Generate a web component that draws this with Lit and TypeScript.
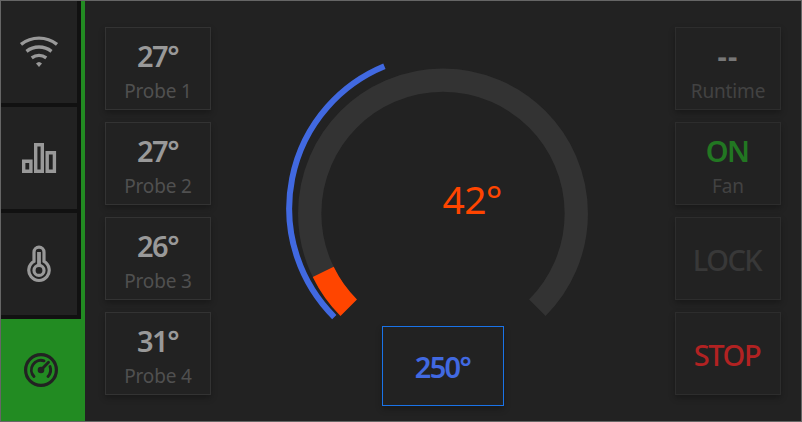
import { LitElement, html, css, svg } from "lit";
import { customElement, property } from "lit/decorators.js";

const wifi = svg`<g fill="none" stroke="#999" stroke-width="3.4">
  <path d="M21 44.4A29 29 0 0 1 57 44.4"/><path d="M26.5 51.3A20.5 20.5 0 0 1 51.5 51.3"/>
  <path d="M31.7 57.9A12.5 12.5 0 0 1 46.3 57.9"/></g>
  <path fill="#999" d="M36 63.6Q39 60.4 42 63.6L39 67Z"/>`;
const bars = svg`<path fill="none" stroke="#999" stroke-width="3.4"
  d="M23.7 55.2h7.2v10h-7.2zM35.7 38.7h6.6v26.5h-6.6zM47.2 46.7h7.2v18.5h-7.2z"/>`;
const thermometer = svg`<g fill="none" stroke="#999" stroke-width="3.2">
  <path d="M34 49.4V40.2a5 5 0 0 1 10 0V49.4a10.2 10.2 0 1 1 -10 0z"/>
  <circle cx="39" cy="58.4" r="5"/><path d="M39 40V54" stroke-width="3.8"/></g>`;
const gauge = svg`<g fill="none" stroke="#222" stroke-width="3.2">
  <circle cx="41" cy="52" r="15.4"/>
  <path stroke-width="2.9" stroke-linecap="round" d="M34 58.5A9.6 9.6 0 0 1 44 42.8M50 48.6A9.6 9.6 0 0 1 48 58.5"/>
  <path stroke-width="2.9" stroke-linecap="round" d="M41 52L48.5 44.3"/></g>
  <circle cx="41" cy="52" r="3.3" fill="#222"/>`;

@customElement("nav-tile")
class NavTile extends LitElement {
  @property({ attribute: false }) icon: unknown;
  static styles = css`
    :host { display: block; height: 102px; width: 76px; background: #222; border: solid #111; border-width: 0 4px 4px 0; }
    :host([active]) { width: 84px; background: #228b22; border: 0; }
    svg { display: block; overflow: visible; }
  `;
  render() {
    return html`<svg width="76" height="102" viewBox="1 1 76 102">${this.icon}</svg>`;
  }
}

@customElement("info-card")
class InfoCard extends LitElement {
  @property() value = "";
  @property() label = "";
  static styles = css`
    :host {
      box-sizing: border-box; width: 106px; height: 83px; border: 1px solid #333;
      background: #222; box-shadow: 0 3px 6px rgba(0, 0, 0, 0.28);
      display: flex; flex-direction: column; align-items: center; justify-content: center;
      padding-top: 2px; white-space: nowrap; color: #999;
    }
    :host([label]) { padding-top: 8px; }
    .value { font-size: 29px; line-height: 36px; font-weight: 600; letter-spacing: -1.5px; margin-right: 1px; }
    .label { font-size: 19px; line-height: 34px; font-weight: 400; color: #505050; letter-spacing: -0.15px; }
    :host(.side) { border-color: #2d2d2d; }
    :host(.side) .value { margin-right: 2px; }
    :host(.side) .label { color: #424242; }
    :host(.runtime) .value { color: #777; font-weight: 700; letter-spacing: 1.2px; margin-right: 0; }
    :host(.on) .value { color: #227722; letter-spacing: -1.6px; }
    :host(.lock) .value { color: #383838; font-weight: 500; letter-spacing: -1.5px; }
    :host(.stop) .value { color: #b22222; font-weight: 500; letter-spacing: -1.4px; }
    :host(.target) { width: 122px; height: 80px; border-color: #1a73e8; }
    :host(.target) .value { color: #4169e1; letter-spacing: -1.6px; }
  `;
  render() {
    return html`<span class="value">${this.value}</span>
      ${this.label ? html`<span class="label">${this.label}</span>` : null}`;
  }
}

@customElement("app-root")
class AppRoot extends LitElement {
  static styles = css`
    :host {
      display: flex; box-sizing: border-box; width: 802px; height: 422px;
      border: 1px solid #666; background: #222; overflow: hidden;
      font-family: "Noto Sans", "Open Sans", sans-serif;
    }
    nav { box-sizing: border-box; width: 84px; flex: none; background: #228b22; }
    .column { display: flex; flex-direction: column; gap: 12px; padding-top: 26px; flex: none; }
    .left { margin-left: 20px; }
    .right { margin-right: 20px; }
    .center { flex: 1; position: relative; display: flex; flex-direction: column; align-items: center; justify-content: flex-end; }
    .center info-card { margin: 0 0 15px 0; }
    .dial { position: absolute; left: 0; top: 0; width: 464px; height: 420px; }
    .reading { font-size: 39px; fill: #ff4500; }
  `;
  render() {
    return html`
      <nav>
        <nav-tile .icon=${wifi}></nav-tile>
        <nav-tile .icon=${bars}></nav-tile>
        <nav-tile .icon=${thermometer}></nav-tile>
        <nav-tile active .icon=${gauge}></nav-tile>
      </nav>
      <div class="column left">
        ${["27°", "27°", "26°", "31°"].map(
          (v, i) => html`<info-card value=${v} label=${`Probe ${i + 1}`}></info-card>`
        )}
      </div>
      <div class="center">
        <svg class="dial" viewBox="211 1 464 420" fill="none">
          <path stroke="#333" stroke-width="23.3" d="M348.7 307.7A133.3 133.3 0 1 1 537.3 307.7"/>
          <path stroke="#ff4500" stroke-width="23.3" d="M348.7 307.7A133.3 133.3 0 0 1 323.2 271.9"/>
          <path stroke="#4169e1" stroke-width="6" d="M334.3 317.1A153.7 153.7 0 0 1 384.4 66.2"/>
          <text class="reading" x="442.5" y="214" textLength="60">42°</text>
        </svg>
        <info-card class="target" value="250°"></info-card>
      </div>
      <div class="column right">
        <info-card class="side runtime" value="--" label="Runtime"></info-card>
        <info-card class="side on" value="ON" label="Fan"></info-card>
        <info-card class="side lock" value="LOCK"></info-card>
        <info-card class="side stop" value="STOP"></info-card>
      </div>
    `;
  }
}
